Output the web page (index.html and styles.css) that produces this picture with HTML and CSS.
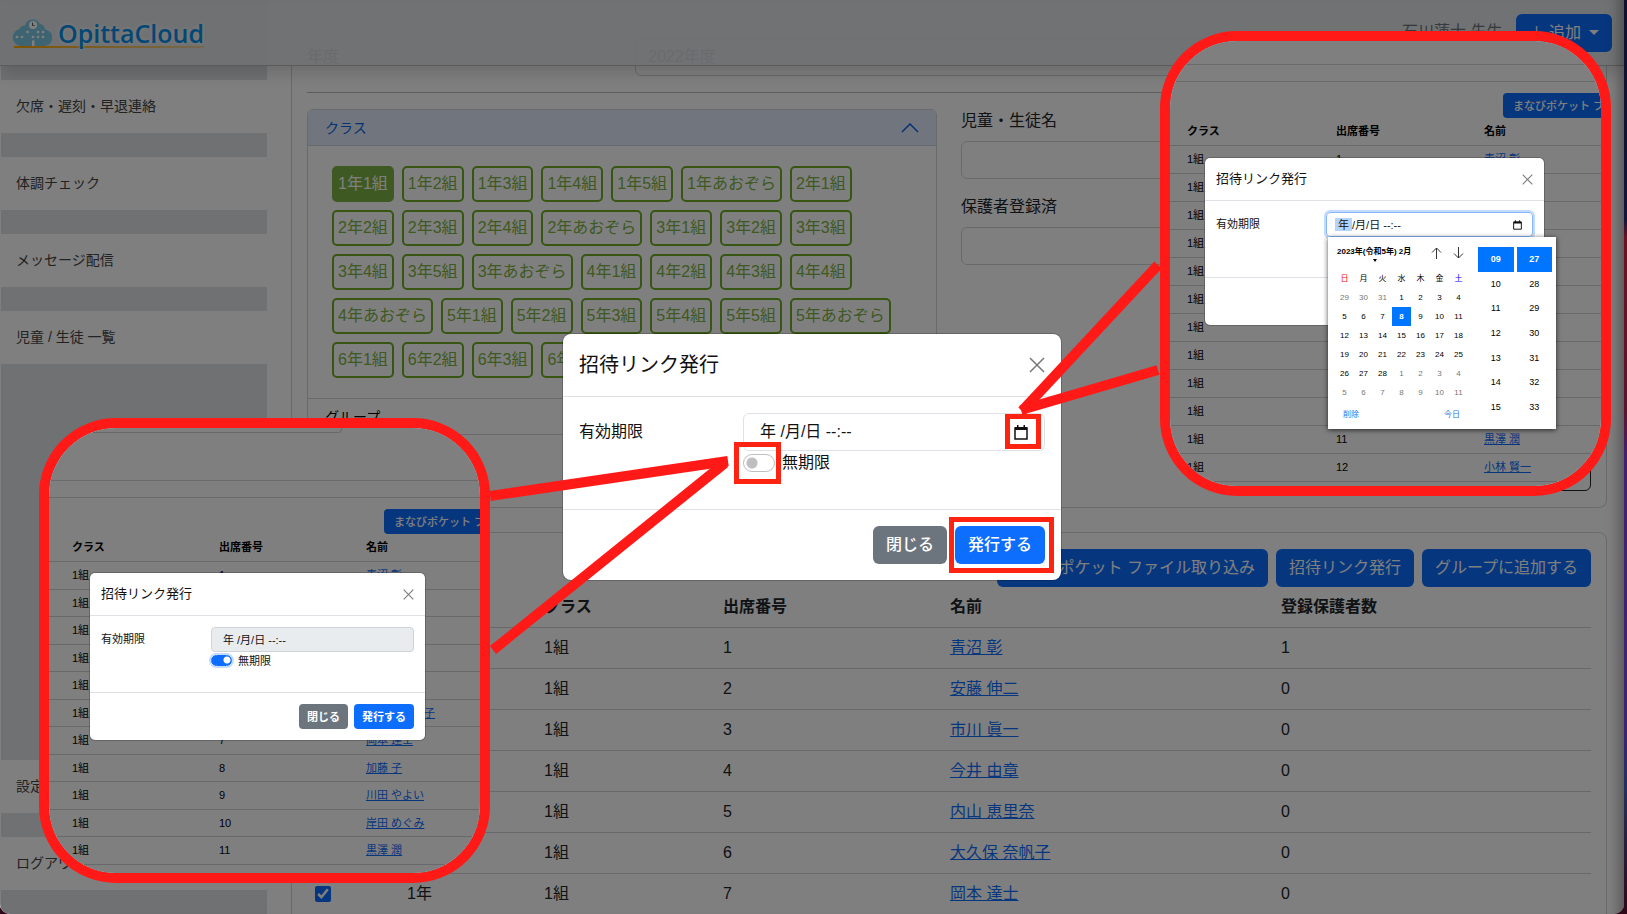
FILE: index.html
```html
<!DOCTYPE html>
<html lang="ja">
<head>
<meta charset="utf-8">
<title>OpittaCloud</title>
<link rel="stylesheet" href="styles.css">
</head>
<body>
<div class="window">
  <header class="topbar">
    <a class="brand" href="#">
      <svg class="brand-mark" width="40" height="28" viewBox="0 0 40 28" aria-hidden="true">
        <path fill="#7cc9e4" d="M9 27a8.500 8.500 0 0 1-2-16.700A6 6 0 0 1 13 6.500a8 8 0 0 1 15-1.500 6 6 0 0 1 5 5.500A8.300 8.300 0 0 1 31 27z"/>
        <circle cx="21" cy="6" r="4" fill="#fff"/>
        <path d="M20.500 3.500v3h2" fill="none" stroke="#555" stroke-width="1"/>
        <g fill="#fff"><path d="M20 21.500h2.500V27H20z"/><circle cx="5" cy="18" r="1.300"/><circle cx="10" cy="18" r="1.300"/><circle cx="15.500" cy="13" r="1.300"/><circle cx="21" cy="18" r="1.300"/><circle cx="26" cy="13" r="1.300"/><circle cx="31" cy="13" r="1.300"/><circle cx="26" cy="18" r="1.300"/><circle cx="31" cy="18" r="1.300"/></g>
      </svg>
      <span class="brand-name">OpittaCloud</span>
    </a>
    <div class="account">
      <span class="account-name">石川蓮士 先生</span>
      <button class="btn btn-primary btn-add" type="button"><span>＋ 追加</span><span class="caret"></span></button>
    </div>
  </header>

  <div class="layout">
    <nav class="sidebar">
      <a href="#">欠席・遅刻・早退連絡</a>
      <a href="#">体調チェック</a>
      <a href="#">メッセージ配信</a>
      <a href="#">児童 / 生徒 一覧</a>
      <a class="push" href="#">設定</a>
      <a href="#">ログアウト</a>
    </nav>

    <main class="main">
      <section class="card card-filter">
        <div class="year-row">
          <label for="year">年度</label>
          <select id="year" class="control"><option>2022年度</option></select>
        </div>
        <hr class="rule">
        <div class="filters">
          <div class="accordion">
            <button class="acc-head acc-open" type="button">クラス
              <svg width="18" height="10" viewBox="0 0 18 10" aria-hidden="true"><path d="M1 9l8-8 8 8" fill="none" stroke="#0c63e4" stroke-width="1.500"/></svg>
            </button>
            <div class="acc-body">
              <button class="tag tag-on" type="button">1年1組</button><button class="tag" type="button">1年2組</button><button class="tag" type="button">1年3組</button><button class="tag" type="button">1年4組</button><button class="tag" type="button">1年5組</button><button class="tag" type="button">1年あおぞら</button><button class="tag" type="button">2年1組</button>
              <button class="tag" type="button">2年2組</button><button class="tag" type="button">2年3組</button><button class="tag" type="button">2年4組</button><button class="tag" type="button">2年あおぞら</button><button class="tag" type="button">3年1組</button><button class="tag" type="button">3年2組</button><button class="tag" type="button">3年3組</button>
              <button class="tag" type="button">3年4組</button><button class="tag" type="button">3年5組</button><button class="tag" type="button">3年あおぞら</button><button class="tag" type="button">4年1組</button><button class="tag" type="button">4年2組</button><button class="tag" type="button">4年3組</button><button class="tag" type="button">4年4組</button>
              <button class="tag" type="button">4年あおぞら</button><button class="tag" type="button">5年1組</button><button class="tag" type="button">5年2組</button><button class="tag" type="button">5年3組</button><button class="tag" type="button">5年4組</button><button class="tag" type="button">5年5組</button><button class="tag" type="button">5年あおぞら</button>
              <button class="tag" type="button">6年1組</button><button class="tag" type="button">6年2組</button><button class="tag" type="button">6年3組</button><button class="tag" type="button">6年4組</button>
            </div>
            <button class="acc-head acc-last" type="button">グループ</button>
          </div>
          <div class="fields">
            <label for="student">児童・生徒名</label>
            <input id="student" class="control" type="text">
            <label for="registered">保護者登録済</label>
            <input id="registered" class="control" type="text">
          </div>
        </div>
        <div class="filter-actions"><button class="btn btn-outline" type="button">クリア</button></div>
      </section>

      <section class="card card-list">
        <div class="list-actions">
          <button class="btn btn-primary" type="button">まなびポケット ファイル取り込み</button>
          <button class="btn btn-primary" type="button">招待リンク発行</button>
          <button class="btn btn-primary" type="button">グループに追加する</button>
        </div>
        <table class="students">
          <colgroup><col class="c-check"><col class="c-grade"><col class="c-class"><col class="c-number"><col class="c-name"><col></colgroup>
          <thead><tr><th></th><th>学年</th><th>クラス</th><th>出席番号</th><th>名前</th><th>登録保護者数</th></tr></thead>
          <tbody>
            <tr><td><input type="checkbox" checked aria-label="青沼 彰"></td><td>1年</td><td>1組</td><td>1</td><td><a href="#">青沼 彰</a></td><td>1</td></tr>
            <tr><td><input type="checkbox" checked aria-label="安藤 伸二"></td><td>1年</td><td>1組</td><td>2</td><td><a href="#">安藤 伸二</a></td><td>0</td></tr>
            <tr><td><input type="checkbox" checked aria-label="市川 眞一"></td><td>1年</td><td>1組</td><td>3</td><td><a href="#">市川 眞一</a></td><td>0</td></tr>
            <tr><td><input type="checkbox" checked aria-label="今井 由章"></td><td>1年</td><td>1組</td><td>4</td><td><a href="#">今井 由章</a></td><td>0</td></tr>
            <tr><td><input type="checkbox" checked aria-label="内山 恵里奈"></td><td>1年</td><td>1組</td><td>5</td><td><a href="#">内山 恵里奈</a></td><td>0</td></tr>
            <tr><td><input type="checkbox" checked aria-label="大久保 奈帆子"></td><td>1年</td><td>1組</td><td>6</td><td><a href="#">大久保 奈帆子</a></td><td>0</td></tr>
            <tr><td><input type="checkbox" checked aria-label="岡本 達士"></td><td>1年</td><td>1組</td><td>7</td><td><a href="#">岡本 達士</a></td><td>0</td></tr>
          </tbody>
        </table>
      </section>
    </main>
  </div>

  <div class="backdrop">
    <div class="modal" role="dialog" aria-labelledby="invite-title">
      <div class="modal-head">
        <h2 id="invite-title">招待リンク発行</h2>
        <button class="close" type="button" aria-label="閉じる"><svg viewBox="0 0 16 16"><path d="M1 1l14 14M15 1L1 15"/></svg></button>
      </div>
      <div class="modal-body">
        <label class="term" for="limit">有効期限</label>
        <div class="date">
          <input id="limit" type="text" value="年 /月/日 --:--">
          <svg class="cal" viewBox="0 0 14 15" aria-hidden="true"><path d="M1 3h12v11H1z" fill="none" stroke="#111" stroke-width="1.500"/><path d="M1 2h12v3H1zM3 0h1.500v3H3zM9.500 0H11v3H9.500z" fill="#111"/></svg>
        </div>
        <label class="switch"><input type="checkbox"><span>無期限</span></label>
      </div>
      <div class="modal-foot">
        <button class="btn btn-secondary" type="button">閉じる</button>
        <button class="btn btn-primary" type="button">発行する</button>
      </div>
    </div>
  </div>
</div>

<section class="callout callout-left">
  <div class="snap">
    <div class="snap-filter"><div class="snap-field"></div></div>
    <div class="snap-list">
      <button class="btn btn-primary" type="button">まなびポケット ファイル取り込み</button>
      <table class="snap-table">
        <thead><tr><th>クラス</th><th>出席番号</th><th>名前</th></tr></thead>
        <tbody>
          <tr><td>1組</td><td>1</td><td><a href="#">青沼 彰</a></td></tr>
          <tr><td>1組</td><td>2</td><td><a href="#">安藤 伸二</a></td></tr>
          <tr><td>1組</td><td>3</td><td><a href="#">市川 眞一</a></td></tr>
          <tr><td>1組</td><td>4</td><td><a href="#">今井 由章</a></td></tr>
          <tr><td>1組</td><td>5</td><td><a href="#">内山 恵里奈</a></td></tr>
          <tr><td>1組</td><td>6</td><td><a href="#">大久保 奈帆子</a></td></tr>
          <tr><td>1組</td><td>7</td><td><a href="#">岡本 達士</a></td></tr>
          <tr><td>1組</td><td>8</td><td><a href="#">加藤 子</a></td></tr>
          <tr><td>1組</td><td>9</td><td><a href="#">川田 やよい</a></td></tr>
          <tr><td>1組</td><td>10</td><td><a href="#">岸田 めぐみ</a></td></tr>
          <tr><td>1組</td><td>11</td><td><a href="#">黒澤 潤</a></td></tr>
        </tbody>
      </table>
    </div>
  </div>
  <div class="modal modal-mini">
    <div class="modal-head">
      <h2>招待リンク発行</h2>
      <button class="close" type="button" aria-label="閉じる"><svg viewBox="0 0 16 16"><path d="M1 1l14 14M15 1L1 15"/></svg></button>
    </div>
    <div class="modal-body">
      <label class="term" for="limit-off">有効期限</label>
      <div class="date"><input id="limit-off" type="text" value="年 /月/日 --:--" disabled></div>
      <label class="switch"><input type="checkbox" checked><span>無期限</span></label>
    </div>
    <div class="modal-foot">
      <button class="btn btn-secondary" type="button">閉じる</button>
      <button class="btn btn-primary" type="button">発行する</button>
    </div>
  </div>
</section>

<section class="callout callout-right">
  <div class="snap">
    <div class="snap-filter"></div>
    <div class="snap-list">
      <button class="btn btn-primary" type="button">まなびポケット ファイル取り込み</button>
      <table class="snap-table">
        <thead><tr><th>クラス</th><th>出席番号</th><th>名前</th></tr></thead>
        <tbody>
          <tr><td>1組</td><td>1</td><td><a href="#">青沼 彰</a></td></tr>
          <tr><td>1組</td><td></td><td></td></tr>
          <tr><td>1組</td><td></td><td></td></tr>
          <tr><td>1組</td><td></td><td></td></tr>
          <tr><td>1組</td><td></td><td></td></tr>
          <tr><td>1組</td><td></td><td></td></tr>
          <tr><td>1組</td><td></td><td></td></tr>
          <tr><td>1組</td><td></td><td></td></tr>
          <tr><td>1組</td><td></td><td></td></tr>
          <tr><td>1組</td><td></td><td></td></tr>
          <tr><td>1組</td><td>11</td><td><a href="#">黒澤 潤</a></td></tr>
          <tr><td>1組</td><td>12</td><td><a href="#">小林 賢一</a></td></tr>
        </tbody>
      </table>
    </div>
  </div>
  <div class="modal modal-mini">
    <div class="modal-head">
      <h2>招待リンク発行</h2>
      <button class="close" type="button" aria-label="閉じる"><svg viewBox="0 0 16 16"><path d="M1 1l14 14M15 1L1 15"/></svg></button>
    </div>
    <div class="modal-body">
      <label class="term" for="limit-pick">有効期限</label>
      <div class="date date-focus">
        <input id="limit-pick" type="text" value="年 /月/日 --:--">
        <svg class="cal" viewBox="0 0 14 15" aria-hidden="true"><path d="M1 3h12v11H1z" fill="none" stroke="#111" stroke-width="1.500"/><path d="M1 2h12v3H1zM3 0h1.500v3H3zM9.500 0H11v3H9.500z" fill="#111"/></svg>
      </div>
    </div>
    <div class="modal-foot"></div>
  </div>
  <div class="picker">
    <div class="picker-date">
      <div class="picker-head">
        <button class="month" type="button"><span>2023年(令和5年) 2月</span><span class="month-caret"></span></button>
        <button class="arrow" type="button" aria-label="前の月"><svg viewBox="0 0 11 12"><path d="M5.500 12V1M1 5.500L5.500 1 10 5.500"/></svg></button>
        <button class="arrow" type="button" aria-label="次の月"><svg viewBox="0 0 11 12"><path d="M5.500 0v11M1 6.500L5.500 11 10 6.500"/></svg></button>
      </div>
      <table class="days">
        <thead><tr><th class="sun">日</th><th>月</th><th>火</th><th>水</th><th>木</th><th>金</th><th class="sat">土</th></tr></thead>
        <tbody>
          <tr><td class="out">29</td><td class="out">30</td><td class="out">31</td><td>1</td><td>2</td><td>3</td><td>4</td></tr>
          <tr><td>5</td><td>6</td><td>7</td><td class="today">8</td><td>9</td><td>10</td><td>11</td></tr>
          <tr><td>12</td><td>13</td><td>14</td><td>15</td><td>16</td><td>17</td><td>18</td></tr>
          <tr><td>19</td><td>20</td><td>21</td><td>22</td><td>23</td><td>24</td><td>25</td></tr>
          <tr><td>26</td><td>27</td><td>28</td><td class="out">1</td><td class="out">2</td><td class="out">3</td><td class="out">4</td></tr>
          <tr><td class="out">5</td><td class="out">6</td><td class="out">7</td><td class="out">8</td><td class="out">9</td><td class="out">10</td><td class="out">11</td></tr>
        </tbody>
      </table>
      <div class="picker-foot"><button type="button">削除</button><button type="button">今日</button></div>
    </div>
    <ul class="time"><li class="now">09</li><li>10</li><li>11</li><li>12</li><li>13</li><li>14</li><li>15</li></ul>
    <ul class="time"><li class="now">27</li><li>28</li><li>29</li><li>30</li><li>31</li><li>32</li><li>33</li></ul>
  </div>
</section>

<svg class="marks" aria-hidden="true">
  <g fill="none" stroke="#ff1a17" stroke-width="10">
    <path d="M490 496L728 461"/>
    <path d="M493 650L725 463"/>
    <path d="M1158 265L1022 411"/>
    <path d="M1158 370L1021 410"/>
  </g>
  <g fill="none" stroke="#ff2411" stroke-width="5">
    <rect x="736.500" y="444.500" width="42" height="37"/>
    <rect x="1007.500" y="416.500" width="31" height="30"/>
    <rect x="951.500" y="519.500" width="100" height="51"/>
  </g>
</svg>
</body>
</html>
```
FILE: styles.css
```css
* { box-sizing: border-box; }

html, body { height: 100%; }

body {
  margin: 0;
  overflow: hidden;
  position: relative;
  padding-right: 3px;
  background: linear-gradient(#101030 0, #14143c 24%, #6b1220 26%, #5a1430 45%, #43206e 50%, #3c2470 80%, #24305c 86%, #300818 100%);
  color: #212529;
  font: 16px/24px "Liberation Sans", "Noto Sans CJK JP", sans-serif;
}

button, input, select { font: inherit; color: inherit; }
button { cursor: pointer; }
a { color: #0d6efd; }
h2 { margin: 0; font-weight: 400; }

.window {
  position: relative;
  height: 100%;
  overflow: hidden;
  border-radius: 0 0 10px 10px;
  background: #fff;
}

/* Top bar */
.topbar {
  position: absolute;
  inset: 0 0 auto 0;
  z-index: 1;
  height: 66px;
  padding: 0 12px;
  display: flex;
  align-items: center;
  justify-content: space-between;
  background: rgba(222, 226, 230, .94);
  border-bottom: 1px solid #b4b7ba;
  box-shadow: 0 8px 16px rgba(0, 0, 0, .15);
}
.brand {
  display: flex;
  align-items: center;
  gap: 6px;
  height: 31px;
  text-decoration: none;
  background: linear-gradient(90deg, #ffa800, rgba(255, 168, 0, .3)) 2px 100% / 100% 2px no-repeat;
}
.brand-name {
  color: #0a8ee8;
  font: 600 25px/30px "Open Sans", sans-serif;
  text-shadow: 0 0 4px #fff;
}
.account { display: flex; align-items: center; gap: 13px; }
.account-name { color: #6c757d; line-height: 24px; padding-bottom: 2px; }
.btn-add { display: flex; align-items: center; gap: 8px; }
.caret {
  border: 5px solid transparent;
  border-top-color: currentColor;
  border-bottom: 0;
}

/* Buttons and form controls */
.btn {
  border: 1px solid transparent;
  border-radius: 6px;
  padding: 6px 12px;
  line-height: 24px;
  white-space: nowrap;
}
.btn-primary { background: #0d6efd; color: #fff; }
.btn-secondary { background: #6c757d; color: #fff; }
.btn-outline { background: none; border-color: #212529; color: #212529; }
.control {
  width: 100%;
  height: 38px;
  padding: 6px 12px;
  border: 1px solid #ced4da;
  border-radius: 6px;
  background: #fff;
  appearance: none;
}

/* Page columns */
.layout { display: flex; height: 100%; }
.sidebar {
  flex: none;
  width: 267px;
  padding: 80px 0 24px;
  display: flex;
  flex-direction: column;
  gap: 24px;
  background: #dee2e6;
  border-left: 1px solid #fff;
}
.sidebar a {
  padding: 16px 15px;
  background: #fff;
  color: #444;
  font-size: 14px;
  line-height: 21px;
  text-decoration: none;
}
.sidebar .push { margin-top: auto; }
.main { flex: 1; min-width: 0; padding: 0 17px 0 24px; }
.card {
  border: 1px solid #d5d5d5;
  border-radius: 8px;
  padding: 16px 15px;
}
.card-filter { border-top: 0; padding-top: 38px; border-radius: 0 0 8px 8px; }
.card-list { margin-top: 24px; }

/* Filters */
.year-row { display: flex; align-items: center; }
.year-row label { flex: none; width: 328px; }
.rule { margin: 16px 0; border: 0; border-top: 1px solid #bbb; }
.filters { display: grid; grid-template-columns: 1fr 1fr; gap: 24px; }
.accordion { border: 1px solid #d2d4d6; border-radius: 6px; overflow: hidden; }
.acc-head {
  display: flex;
  align-items: center;
  justify-content: space-between;
  width: 100%;
  height: 36px;
  padding: 0 17px;
  border: 0;
  background: #fff;
  font-size: 14px;
  line-height: 20px;
}
.acc-open { background: #e2ecfc; color: #0c63e4; border-bottom: 1px solid #c9d2df; }
.acc-last { border-top: 1px solid #d2d4d6; color: #000; }
.acc-body { display: flex; flex-wrap: wrap; gap: 8px; padding: 20px 24px; }
.tag {
  height: 36px;
  padding: 0 4px;
  border: 2px solid #6dac24;
  border-radius: 5px;
  background: #fff;
  color: #7cb342;
  line-height: 24px;
}
.tag-on { background: #7cb342; border-color: #7cb342; color: #fff; }
.fields label { display: block; margin-bottom: 8px; }
.fields .control { display: block; margin-bottom: 16px; }
.filter-actions { margin-top: 18px; text-align: right; }
.filter-actions .btn { display: inline-block; vertical-align: top; }

/* Student list */
.list-actions { display: flex; justify-content: flex-end; gap: 8px; }
.students { width: 100%; border-collapse: collapse; table-layout: fixed; }
.students th, .students td {
  height: 41px;
  padding: 8px;
  border-bottom: 1px solid #d0d3d6;
  text-align: left;
  line-height: 24px;
}
.students th { height: 40px; padding: 8px 8px 7px; }
.students .c-check { width: 92px; }
.students .c-grade { width: 137px; }
.students .c-class { width: 179px; }
.students .c-number { width: 227px; }
.students .c-name { width: 331px; }
.students input { width: 16px; height: 16px; margin: 4px 0; display: block; accent-color: #0d6efd; }

/* Dialog */
.backdrop {
  position: absolute;
  inset: 0;
  z-index: 2;
  display: flex;
  align-items: center;
  justify-content: center;
  background: rgba(0, 0, 0, .5);
  box-shadow: inset -16px 0 14px -12px rgba(0, 0, 0, .35);
}
.modal {
  width: 498px;
  border-radius: 8px;
  background: #fff;
  box-shadow: 0 0 0 1px rgba(0, 0, 0, .2);
  color: #111;
}
.modal-head {
  display: flex;
  align-items: center;
  justify-content: space-between;
  height: 63px;
  padding: 0 16px;
  border-bottom: 1px solid #dee2e6;
}
.modal-head h2 { font-size: 20px; line-height: 30px; }
.close { display: block; width: 16px; height: 16px; padding: 0; border: 0; background: none; }
.close svg { display: block; width: 100%; height: 100%; fill: none; stroke: #777; stroke-width: 1.500; }
.modal-body {
  display: grid;
  grid-template-columns: 164px 1fr;
  align-items: center;
  padding: 16px 16px 34px;
}
.date {
  display: flex;
  align-items: center;
  height: 38px;
  padding: 0 16px;
  border: 1px solid #dee2e6;
  border-radius: 6px;
}
.date input { flex: 1; min-width: 0; width: 100%; padding: 0; border: 0; background: none; outline: 0; color: #111; }
.cal { flex: none; width: 14px; height: 15px; }
.switch { grid-column: 2; display: flex; align-items: center; gap: 7px; line-height: 24px; }
.switch input {
  appearance: none;
  width: 32px;
  height: 18px;
  margin: 0;
  border: 1px solid #bfbfbf;
  border-radius: 9px;
  background: radial-gradient(circle at 8px 8px, #bfbfbf 5px, transparent 6px);
}
.modal-foot {
  display: flex;
  justify-content: flex-end;
  gap: 8px;
  padding: 16px;
  border-top: 1px solid #dee2e6;
}
.modal-foot .btn { font-weight: 500; }

/* Enlarged detail views */
.callout {
  position: absolute;
  z-index: 3;
  width: 451px;
  height: 465px;
  border: 10px solid #ff1a17;
  border-radius: 77px;
  overflow: hidden;
  background: #808080;
  font-size: 11px;
  line-height: 16px;
}
.callout-left { left: 39px; top: 418px; }
.callout-right { left: 1160px; top: 31px; }
.snap { position: relative; height: 100%; overflow: hidden; background: #fff; border-radius: 67px; }
.snap::after { content: ""; position: absolute; inset: 0; background: rgba(0, 0, 0, .5); }
.snap-filter { height: 53px; border-bottom: 1px solid #d5d5d5; }
.snap-field { width: 293px; height: 5px; border: solid #ced4da; border-width: 0 1px 1px 0; border-radius: 0 0 4px 0; }
.snap-list { margin-top: 16px; padding-top: 11px; border-top: 1px solid #d5d5d5; }
.callout .btn { height: 25px; padding: 0 9px; border-radius: 4px; font-weight: 700; line-height: 16px; }
.snap .btn { display: block; margin-left: 335px; font-weight: 500; }
.snap-table { width: 100%; border-collapse: collapse; table-layout: fixed; }
.snap-table th, .snap-table td { height: 28px; padding: 0 0 0 5px; border-bottom: 1px solid #d0d3d6; text-align: left; color: #000; }
.snap-table th { height: 27px; }
.callout-left tr:nth-child(even) td { height: 27px; }
.snap-table th:first-child { width: 165px; }
.snap-table th:nth-child(2) { width: 147px; }
.snap-table th:first-child, .snap-table td:first-child { padding-left: 23px; }
.callout-right .snap-filter { height: 24px; }
.callout-right .snap-list { padding-top: 11px; }
.callout-right .snap .btn { margin-left: 333px; }
.callout-right .snap-table th:first-child { width: 161px; }
.callout-right .snap-table th:nth-child(2) { width: 148px; }
.callout-right .snap-table th:first-child, .callout-right .snap-table td:first-child { padding-left: 17px; }

.modal-mini { position: absolute; left: 41px; top: 145px; width: 335px; border-radius: 5px; }
.callout-right .modal-mini { left: 35px; top: 117px; width: 339px; }
.modal-mini .modal-head { height: 43px; padding: 0 11px; }
.modal-mini .modal-head h2 { font-size: 13px; line-height: 20px; }
.modal-mini .close { width: 11px; height: 11px; }
.modal-mini .modal-body { grid-template-columns: 110px 1fr; padding: 11px 11px 23px; min-height: 76px; align-items: start; }
.modal-mini .term { line-height: 25px; }
.modal-mini .date { height: 25px; padding: 0 11px; border-radius: 4px; }
.modal-mini .date:has(:disabled) { background: #e9ecef; border-color: #ced4da; }
.modal-mini .date-focus { border-color: #86b7fe; box-shadow: 0 0 0 2px #c2dbfe; padding: 0 10px 0 8px; }
.date-focus input { background: linear-gradient(#b3d4fd, #b3d4fd) 0 50% / 17px 13px no-repeat; padding-left: 3px; }
.modal-mini .cal { width: 9px; height: 10px; }
.modal-mini .switch { gap: 6px; line-height: 16px; }
.modal-mini .switch input {
  width: 21px;
  height: 11px;
  border-color: #0d6efd;
  background: radial-gradient(circle at 15px 4px, #fff 3px, #0d6efd 4px);
  box-shadow: 0 0 0 2px #c2dbfe;
}
.modal-mini .modal-foot { gap: 6px; padding: 11px 11px 10px; min-height: 48px; }
.modal-mini .modal-foot .btn { font-weight: 700; padding: 0 7px; }

/* Date and time picker */
.picker {
  position: absolute;
  left: 158px;
  top: 196px;
  display: flex;
  gap: 3px;
  width: 228px;
  height: 192px;
  padding: 10px 4px 0 7px;
  background: #fff;
  box-shadow: 0 1px 5px rgba(0, 0, 0, .7);
  color: #000;
  font-size: 8px;
  line-height: 12px;
}
.picker button { padding: 0; border: 0; background: none; }
.picker-date { flex: none; width: 140px; }
.picker-head { display: flex; align-items: flex-start; height: 22px; padding: 0 6px 0 2px; }
.picker .month { flex: 1; font-weight: 700; line-height: 10px; text-align: left; white-space: nowrap; }
.month span { display: block; }
.month .month-caret { width: 0; margin: 2px 0 0 36px; border: 2px solid transparent; border-top: 3px solid #000; border-bottom: 0; }
.arrow { width: 22px; }
.arrow svg { display: block; width: 11px; height: 12px; margin: 0 auto; fill: none; stroke: #333; stroke-width: 1; }
.days { width: 133px; border-collapse: collapse; table-layout: fixed; }
.days th, .days td { height: 19px; padding: 0; text-align: center; font-weight: 400; }
.days .sun { color: #f00; }
.days .sat { color: #00f; }
.days .out { color: #777; }
.days .today, .time .now { background: #0075ff; color: #fff; font-weight: 700; }
.picker-foot { display: flex; justify-content: space-between; padding: 7px 15px 0 8px; }
.picker-foot button { color: #1a73e8; }
.time { flex: 1; margin: 0; padding: 0; list-style: none; font-size: 9px; text-align: center; display: flex; flex-direction: column; height: 172px; }
.time li { flex: 1; display: flex; align-items: center; justify-content: center; }

.marks { position: absolute; inset: 0; z-index: 4; width: 100%; height: 100%; pointer-events: none; }
```
